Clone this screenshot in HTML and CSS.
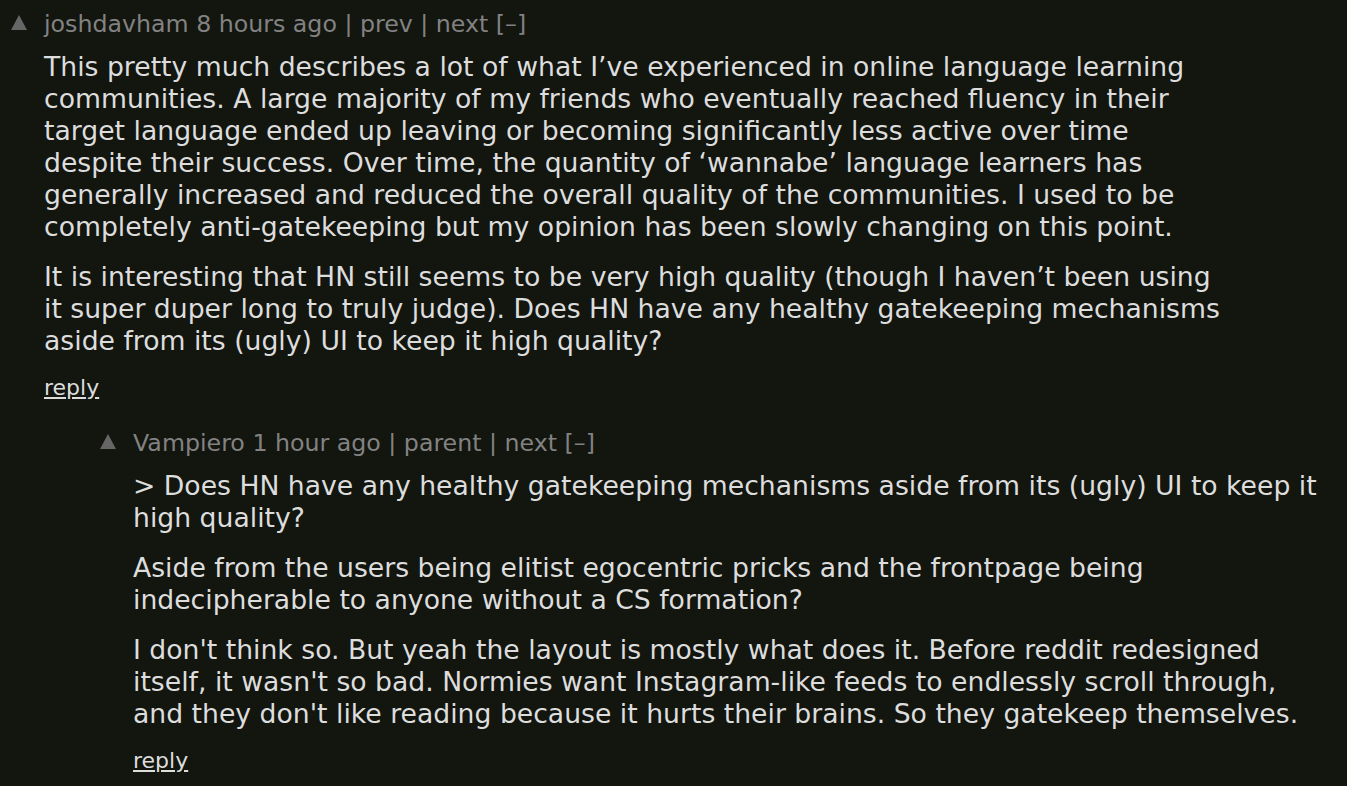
FILE: index.html
```html
<!DOCTYPE html>
<html>
<head>
<meta charset="utf-8">
<link rel="stylesheet" href="styles.css">
</head>
<body>
<div class="thread">
  <div class="comment">
    <div class="vote"><svg width="16" height="15" viewBox="0 0 16 15"><polygon points="8,0 16,15 0,15" fill="#666"/></svg></div>
    <div class="main">
      <div class="meta">joshdavham 8 hours ago | prev | next [–]</div>
      <div class="text">
        <p>This pretty much describes a lot of what I’ve experienced in online language learning communities. A large majority of my friends who eventually reached fluency in their target language ended up leaving or becoming significantly less active over time despite their success. Over time, the quantity of ‘wannabe’ language learners has generally increased and reduced the overall quality of the communities. I used to be completely anti-gatekeeping but my opinion has been slowly changing on this point.</p>
        <p>It is interesting that HN still seems to be very high quality (though I haven’t been using it super duper long to truly judge). Does HN have any healthy gatekeeping mechanisms aside from its (ugly) UI to keep it high quality?</p>
      </div>
      <div class="reply"><a href="#">reply</a></div>
    </div>
  </div>
  <div class="comment nested">
    <div class="vote"><svg width="16" height="15" viewBox="0 0 16 15"><polygon points="8,0 16,15 0,15" fill="#666"/></svg></div>
    <div class="main">
      <div class="meta">Vampiero 1 hour ago | parent | next [–]</div>
      <div class="text">
        <p>&gt; Does HN have any healthy gatekeeping mechanisms aside from its (ugly) UI to keep it high quality?</p>
        <p>Aside from the users being elitist egocentric pricks and the frontpage being indecipherable to anyone without a CS formation?</p>
        <p>I don't think so. But yeah the layout is mostly what does it. Before reddit redesigned itself, it wasn't so bad. Normies want Instagram-like feeds to endlessly scroll through, and they don't like reading because it hurts their brains. So they gatekeep themselves.</p>
      </div>
      <div class="reply"><a href="#">reply</a></div>
    </div>
  </div>
</div>
</body>
</html>
```

FILE: styles.css
```css
html, body {
  margin: 0;
  padding: 0;
  background: #13150f;
}
body {
  font-family: "DejaVu Sans", sans-serif;
  color: #dddddd;
  height: 786px;
  overflow: hidden;
}
.thread {
  padding: 8px 0 0 11px;
}
.comment {
  display: flex;
  gap: 17px;
}
.comment.nested {
  margin-left: 89px;
  margin-top: 25px;
}
.vote {
  width: 16px;
  padding-top: 7px;
  flex: none;
}
.vote svg { display: block; }
.main {
  width: 1188px;
}
.meta {
  font-size: 23.7px;
  line-height: 32px;
  color: #828282;
}
.text {
  font-size: 26.67px;
  line-height: 32px;
  color: #dddddd;
  margin-top: 11px;
}
.text p {
  margin: 0 0 18px 0;
}
.text p:last-child {
  margin-bottom: 0;
}
.reply {
  font-size: 22px;
  line-height: 28px;
  margin-top: 17px;
}
.reply a {
  color: #dddddd;
  text-decoration: underline;
}
```
